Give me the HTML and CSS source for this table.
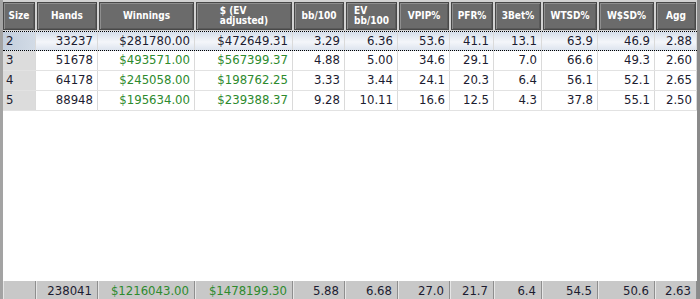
FILE: index.html
```html
<!DOCTYPE html>
<html>
<head>
<meta charset="utf-8">
<link rel="stylesheet" href="styles.css">
</head>
<body>
<div class="grid-view">
  <div class="cols head">
    <div class="hc"><span>Size</span></div>
    <div class="hc"><span>Hands</span></div>
    <div class="hc"><span>Winnings</span></div>
    <div class="hc"><span>$ (EV<br>adjusted)</span></div>
    <div class="hc"><span>bb/100</span></div>
    <div class="hc"><span>EV<br>bb/100</span></div>
    <div class="hc"><span>VPIP%</span></div>
    <div class="hc"><span>PFR%</span></div>
    <div class="hc"><span>3Bet%</span></div>
    <div class="hc"><span>WTSD%</span></div>
    <div class="hc"><span>W$SD%</span></div>
    <div class="hc"><span>Agg</span></div>
  </div>
  <div class="cols row selected">
    <div class="c size">2</div><div class="c">33237</div><div class="c">$281780.00</div><div class="c">$472649.31</div><div class="c">3.29</div><div class="c">6.36</div><div class="c">53.6</div><div class="c">41.1</div><div class="c">13.1</div><div class="c">63.9</div><div class="c">46.9</div><div class="c">2.88</div>
  </div>
  <div class="cols row">
    <div class="c size">3</div><div class="c">51678</div><div class="c money">$493571.00</div><div class="c money">$567399.37</div><div class="c">4.88</div><div class="c">5.00</div><div class="c">34.6</div><div class="c">29.1</div><div class="c">7.0</div><div class="c">66.6</div><div class="c">49.3</div><div class="c">2.60</div>
  </div>
  <div class="cols row">
    <div class="c size">4</div><div class="c">64178</div><div class="c money">$245058.00</div><div class="c money">$198762.25</div><div class="c">3.33</div><div class="c">3.44</div><div class="c">24.1</div><div class="c">20.3</div><div class="c">6.4</div><div class="c">56.1</div><div class="c">52.1</div><div class="c">2.65</div>
  </div>
  <div class="cols row">
    <div class="c size">5</div><div class="c">88948</div><div class="c money">$195634.00</div><div class="c money">$239388.37</div><div class="c">9.28</div><div class="c">10.11</div><div class="c">16.6</div><div class="c">12.5</div><div class="c">4.3</div><div class="c">37.8</div><div class="c">55.1</div><div class="c">2.50</div>
  </div>
  <div class="empty"></div>
  <div class="cols foot">
    <div class="f"></div><div class="f">238041</div><div class="f money">$1216043.00</div><div class="f money">$1478199.30</div><div class="f">5.88</div><div class="f">6.68</div><div class="f">27.0</div><div class="f">21.7</div><div class="f">6.4</div><div class="f">54.5</div><div class="f">50.6</div><div class="f">2.63</div>
  </div>
</div>
</body>
</html>
```
FILE: styles.css
```css
html, body {
  margin: 0;
  padding: 0;
  background: #ffffff;
}
.grid-view {
  width: 700px;
  height: 299px;
  box-sizing: border-box;
  border-left: 3px solid #a3a3a3;
  border-right: 3px solid #8a8a8a;
  display: flex;
  flex-direction: column;
  font-family: "DejaVu Sans Condensed", "DejaVu Sans", sans-serif;
  font-size: 13px;
  color: #1c1c30;
  overflow: hidden;
}
.cols {
  display: grid;
  grid-template-columns: 33px 62px 97px 98px 52px 53px 52px 44px 48px 56px 57px 42px;
}
.head {
  height: 31px;
  box-sizing: border-box;
  padding: 2px 0 1px 0;
  background: #d2d2d2;
}
.hc {
  margin: 0 1px;
  background: #6b6b6b;
  border: 1px solid #484848;
  box-shadow: inset 1px 1px 0 #8e8e8e, inset -1px -1px 0 #5a5a5a;
  color: #ffffff;
  font-weight: bold;
  font-size: 10px;
  display: flex;
  align-items: center;
  justify-content: center;
  line-height: 10px;
}
.hc:first-child { margin-left: 0; }
.hc span {
  display: inline-block;
  text-align: left;
}
.row {
  height: 20px;
  box-sizing: border-box;
  border-bottom: 1px solid #e2e2e2;
}
.row.selected {
  border-top: 1px dotted #000000;
  border-bottom: 1px dotted #000000;
  background: linear-gradient(#d6dfea, #f4f6fa 55%, #dde4ee);
}
.c {
  border-right: 1px solid #dadada;
  text-align: right;
  padding-right: 4px;
  line-height: 18px;
  white-space: nowrap;
}
.c.size {
  text-align: left;
  padding-left: 3px;
  background: #dcdcdc;
}
.selected .c.size {
  background: linear-gradient(90deg, #c3cedc, #d2dbe6);
}
.money { color: #2d8a2d; }
.selected .money { color: #1c1c30; }
.empty { flex: 1; }
.foot {
  height: 18px;
  background: #c8c8c8;
}
.f {
  text-align: right;
  padding-right: 5px;
  line-height: 20px;
  border-right: 1px solid #8e8e8e;
  box-shadow: inset 1px 0 0 #e6e6e6;
  white-space: nowrap;
}
```
